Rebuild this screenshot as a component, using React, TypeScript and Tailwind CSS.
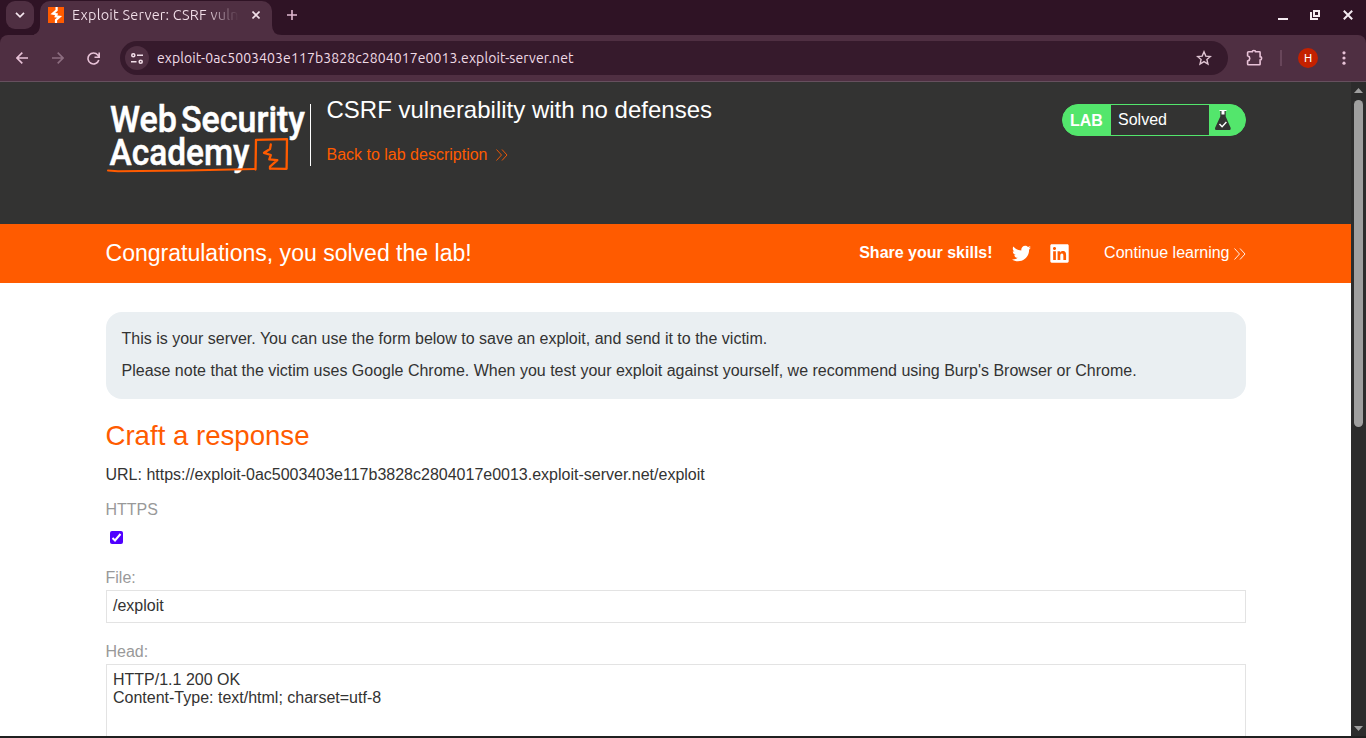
import React from "react";
import { FaTwitter, FaLinkedin } from "react-icons/fa";

const chromeFont = "font-['Ubuntu','Noto_Sans',sans-serif]";
const pageFont = "font-['Liberation_Sans',Arial,sans-serif]";

function TabStrip() {
  return (
    <div className="flex h-[35px] items-start bg-[#2f1325]">
      <div className="ml-[6px] mt-px flex h-7 w-7 items-center justify-center rounded-[9px] bg-[#4f2f42]">
        <svg width="10" height="6" viewBox="0 0 10 6" fill="none" stroke="#f5e6ee" strokeWidth="1.7">
          <path d="M1 .9 5 4.8 9 .9" />
        </svg>
      </div>
      <svg className="mt-[25px]" width="6" height="10" viewBox="0 0 6 10">
        <path d="M6 0V10H-4Q6 10 6 0Z" fill="#4f2f42" />
      </svg>
      <div className="mt-px flex h-[34px] w-[232px] items-center rounded-t-[10px] bg-[#4f2f42] pl-2 pb-[6px]">
        <svg width="16" height="16" viewBox="0 0 16 16">
          <path fill="#ff5b00" d="M0 0h16v16H0z" />
          <path fill="none" stroke="#fff" strokeWidth="2.2" d="M8.600 0v3.300L4.800 6.600 8.600 7.400 7.800 9.300 11.600 9.800 8 13v3" />
        </svg>
        <span className="ml-2 w-[167px] overflow-hidden whitespace-nowrap bg-linear-to-r from-[#f2dfe9] from-80% to-transparent bg-clip-text text-[14.5px] leading-5 tracking-[0.19px] text-transparent">
          Exploit Server: CSRF vuln
        </span>
        <svg className="ml-[13px]" width="8" height="8" viewBox="0 0 8 8" stroke="#f2dfe9" strokeWidth="1.6">
          <path d="M.5.5l7 7M7.5.5l-7 7" />
        </svg>
      </div>
      <svg className="mt-[25px]" width="10" height="10" viewBox="0 0 10 10">
        <path d="M0 0V10H10Q0 10 0 0Z" fill="#4f2f42" />
      </svg>
      <svg className="ml-[5px] mt-[10px]" width="10" height="10" viewBox="0 0 10 10" stroke="#dfb9cf" strokeWidth="1.6">
        <path d="M5 0V10M0 5H10" />
      </svg>
      <div className="ml-auto mr-[13px] mt-[10px] flex">
        <svg width="75" height="10" viewBox="0 0 75 10" fill="none" stroke="#f3eaf0">
          <path d="M0 9h10" strokeWidth="2" />
          <path d="M36 1h5v5h-5z" strokeWidth="2" />
          <path d="M33 2v7h7" strokeWidth="2" />
          <path d="M65.8.8l8.400 8.400M74.200.8l-8.400 8.400" strokeWidth="2" />
        </svg>
      </div>
    </div>
  );
}

function Toolbar() {
  return (
    <div className="bg-[#2f1325]">
      <div className="flex h-[47px] items-center rounded-t-[8px] border-b border-[#66505e] bg-[#4f2f42]">
        <svg className="ml-4" width="12" height="12" viewBox="0 0 12 12" fill="none" stroke="#e8c2d7" strokeWidth="1.6">
          <path d="M12 6H1M6.300.600.900 6l5.400 5.400" />
        </svg>
        <svg className="ml-6" width="12" height="12" viewBox="0 0 12 12" fill="none" stroke="#8d6e80" strokeWidth="1.6">
          <path d="M0 6h11M5.700.600 11.100 6l-5.400 5.400" />
        </svg>
        <svg className="ml-[23px]" width="13" height="13" viewBox="0 0 13 13" fill="none" stroke="#e8c2d7" strokeWidth="1.6">
          <path d="M11.800 8A5.500 5.500 0 1 1 10.800 3L12 4.500M12.200.5v4.700H7.500" />
        </svg>
        <div className="ml-5 flex h-[34px] w-[1108px] items-center rounded-full bg-[#361a2c] pl-[5px] pr-[17px]">
          <span className="flex h-6 w-6 items-center justify-center rounded-full bg-[#4f2f42]">
            <svg width="12" height="11" viewBox="0 0 12 11" fill="none" stroke="#f2dfe9" strokeWidth="1.5">
              <circle cx="2.3" cy="2.3" r="1.55" />
              <path d="M6 2.3h6M0 8.7h5.5" />
              <circle cx="9.7" cy="8.7" r="1.55" />
            </svg>
          </span>
          <span className="ml-2 whitespace-nowrap text-[14px] leading-5 tracking-[0.1px] text-[#f0dbe6]">
            exploit-0ac5003403e117b3828c2804017e0013.exploit-server.net
          </span>
          <svg className="-mr-px ml-auto" width="16" height="16" viewBox="0 0 16 16" fill="none" stroke="#e0c5d3" strokeWidth="1.4">
            <path d="M8 1.800 9.800 6.100l4.600.400-3.500 3 1.050 4.500L8 11.600 4.050 14l1.050-4.500-3.500-3 4.600-.400Z" />
          </svg>
        </div>
        <svg className="ml-[17px]" width="20" height="18" viewBox="0 0 20 18" fill="none" stroke="#e8c2d7" strokeWidth="1.6">
          <path d="M3.600 2.800h3.600a1.700 1.300 0 0 1 3.400 0H14.500q.6 0 .6.6v4.200a1.500 1.700 0 0 1 0 3.400v4.200q0 .6-.6.6H3.400q-.8 0-.8-.8V12q2.200-.8 2.200-2.600T2.600 6.800V3.600Q2.600 2.800 3.600 2.800Z" />
        </svg>
        <span className="ml-[15px] h-4 w-[2px] bg-[#68465a]" />
        <span className="ml-4 flex h-5 w-5 items-center justify-center rounded-full bg-[#c42100] pt-px font-['Roboto',sans-serif] text-[11.500px] leading-none text-white">
          H
        </span>
        <svg className="ml-6" width="4" height="14" viewBox="0 0 4 14" fill="#e8c2d7">
          <circle cx="2" cy="1.8" r="1.6" />
          <circle cx="2" cy="7" r="1.6" />
          <circle cx="2" cy="12.2" r="1.6" />
        </svg>
      </div>
    </div>
  );
}

function AcademyLogo() {
  return (
    <svg className="overflow-visible" width="205" height="84" viewBox="0 -10 205 84" fill="none">
      <g fill="#fff" stroke="#fff" strokeWidth=".5" fontFamily="Roboto, sans-serif" fontWeight="500" fontSize="36.500">
        <text x="4" y="32" textLength="67" lengthAdjust="spacingAndGlyphs">Web</text>
        <text x="75" y="32" textLength="124" lengthAdjust="spacingAndGlyphs">Security</text>
        <text x="3.500" y="64.500" textLength="140" lengthAdjust="spacingAndGlyphs">Academy</text>
      </g>
      <g stroke="#ff5b00" strokeLinejoin="round" strokeLinecap="round">
        <path strokeWidth="2" d="M2 70.500 12 71.200 80 70.500 149 69" />
        <path strokeWidth="2.300" d="M149.500 69.500 150 39.800 181 39.200 180.600 68.800 164 68.600" />
        <path strokeWidth="2.300" d="M164.800 44.500 164 49l-6 3.800 6.800 2.200-1.500 4.300 8 .8-7.300 6.500v2" />
      </g>
    </svg>
  );
}

function DoubleChevron() {
  return (
    <svg width="12" height="12" viewBox="0 0 12 12" fill="none" stroke="currentColor" strokeWidth=".9">
      <path d="M.5.5 5.500 6 .5 11.500M6 .5 11 6 6 11.500" />
    </svg>
  );
}

function LabHeader() {
  return (
    <header className="flex h-[142px] items-start bg-[#333332] pl-[106px] pr-[105px]">
      <div className="mt-[8px]">
        <AcademyLogo />
      </div>
      <div className="-ml-px mt-[22px] h-[62px] w-px bg-white" />
      <div className="ml-[15.500px] pt-[14px]">
        <h2 className="text-[24px] leading-7 text-white">CSRF vulnerability with no defenses</h2>
        <a className="mt-[21px] flex items-center gap-[9px] text-[16px] leading-5 text-[#ff5b00]">
          Back to lab description
          <DoubleChevron />
        </a>
      </div>
      <div className="ml-auto mt-[22px] flex h-8 w-[184px] overflow-hidden rounded-full border border-[#53e66c] bg-[#53e66c]">
        <span className="w-12 pl-[7px] text-[16px] font-bold leading-[31px] text-white">LAB</span>
        <span className="w-[98px] bg-[#333332] pl-[7px] text-[16px] leading-[29px] text-white">Solved</span>
        <svg className="ml-[5px] mt-[4px]" width="18" height="22" viewBox="0 0 18 22">
          <path d="M6.300 2h5.400v5.500l5 11.500q.3 2-1 2H2q-1.300 0-1-2L6.300 7.500Z" fill="#333332" />
          <path d="M7.500 2h3v3.600h-3z" fill="#fff" />
          <path d="M5.500 1.500h7" stroke="#fff" strokeWidth="1" />
          <path d="m5.500 15 2.600 2.700 4.300-4.700" fill="none" stroke="#fff" strokeWidth="1.400" />
        </svg>
      </div>
    </header>
  );
}

function SolvedBanner() {
  return (
    <div className="flex h-[59px] items-center bg-[#ff5b00] pb-[2px] pl-[105.500px] pr-[105px] text-[16px] text-white">
      <h4 className="text-[23.040px] leading-7">Congratulations, you solved the lab!</h4>
      <div className="ml-auto flex items-center">
        <span className="font-bold">Share your skills!</span>
        <FaTwitter className="ml-[19px] mt-[2px]" size={19} />
        <FaLinkedin className="ml-[18px] mt-[2px]" size={21} />
        <span className="ml-[34.500px]">Continue learning</span>
        <span className="ml-[4.500px] mt-[2px]"><DoubleChevron /></span>
      </div>
    </div>
  );
}

function ExploitForm() {
  return (
    <main className="pl-[105.500px] pr-[105px] pt-[29px] text-[16px] leading-5 text-[#333332]">
      <div className="h-[87px] rounded-[16px] bg-[#eaeff2] pl-4 pt-[17px]">
        <p>This is your server. You can use the form below to save an exploit, and send it to the victim.</p>
        <p className="mt-3">
          Please note that the victim uses Google Chrome. When you test your exploit against yourself, we recommend using Burp's Browser or Chrome.
        </p>
      </div>
      <h3 className="mt-[21px] text-[27.600px] leading-8 text-[#ff5b00]">Craft a response</h3>
      <p className="mt-[13px]">URL: https://exploit-0ac5003403e117b3828c2804017e0013.exploit-server.net/exploit</p>
      <p className="mt-[15px] text-[#999]">HTTPS</p>
      <span className="ml-[4.500px] mt-[10.500px] flex h-[13px] w-[13px] items-center justify-center rounded-[2px] bg-[#5000ff]">
        <svg width="11" height="11" viewBox="0 0 11 11" fill="none" stroke="#fff" strokeWidth="2">
          <path d="m1.500 6 2.500 2.500 5.500-6.500" />
        </svg>
      </span>
      <p className="mt-[24.500px] text-[#999]">File:</p>
      <div className="mt-[2px] h-[33px] border border-[#e3e3e3] pl-[6.500px] leading-[29px]">/exploit</div>
      <p className="mt-[19px] text-[#999]">Head:</p>
      <div className="mt-[2px] h-[160px] border border-[#e3e3e3] pl-[6.500px] pt-[6px] leading-[18px]">
        HTTP/1.1 200 OK
        <br />
        Content-Type: text/html; charset=utf-8
      </div>
    </main>
  );
}

function Scrollbar() {
  return (
    <div className="flex w-[15px] flex-col items-center bg-[#2c2c2c]">
      <svg className="mt-[6px]" width="9" height="5" viewBox="0 0 9 5">
        <path d="M0 5 4.500 0 9 5Z" fill="#9f9f9f" />
      </svg>
      <div className="mt-[7px] h-[327px] w-[9px] rounded-full bg-[#9f9f9f]" />
      <svg className="mb-[5px] mt-auto" width="9" height="5" viewBox="0 0 9 5">
        <path d="M0 0 4.500 5 9 0Z" fill="#9f9f9f" />
      </svg>
    </div>
  );
}

export default function App() {
  return (
    <div className="flex h-[738px] w-[1366px] flex-col overflow-hidden bg-[#202020]">
      <div className={chromeFont}>
        <TabStrip />
        <Toolbar />
      </div>
      <div className={"flex h-[654px] " + pageFont}>
        <div className="h-full w-[1351px] overflow-hidden bg-white">
          <LabHeader />
          <SolvedBanner />
          <ExploitForm />
        </div>
        <Scrollbar />
      </div>
    </div>
  );
}
